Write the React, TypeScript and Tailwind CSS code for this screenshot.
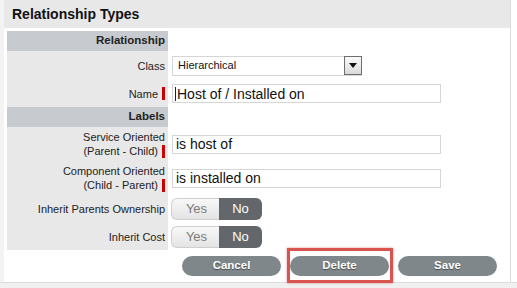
import React from "react";

const font = { fontFamily: '"Liberation Sans", Arial, sans-serif' };

function Req() {
  return <span className="inline-block w-[3px] h-[13px] bg-[#cc0000] ml-[4px] align-middle" />;
}

function Label({ children, h }: { children: React.ReactNode; h: string }) {
  return (
    <div className={`w-[161px] ${h} bg-[#e8e8e8] flex items-center justify-end pr-[3px] text-right text-[11px] leading-[14px] text-[#222]`}>
      {children}
    </div>
  );
}

function Section({ title }: { title: string }) {
  return (
    <div className="flex h-[20px]">
      <div className="w-[161px] bg-[#c7cbcf] flex items-center justify-end pr-[3px] text-[11.5px] font-bold text-[#222]">
        {title}
      </div>
      <div className="flex-1" />
    </div>
  );
}

function TextBox({ value, caret }: { value: string; caret?: boolean }) {
  return (
    <div className="w-[269px] h-[19px] border border-[#d6d6d6] bg-white flex items-center pl-[2px] text-[14px] text-[#111] leading-none">
      {caret && <span className="inline-block w-px h-[14px] bg-[#222] mr-px" />}
      <span className={caret ? "" : "pl-[1px]"}>{value}</span>
    </div>
  );
}

function Toggle() {
  return (
    <div className="flex h-[22px] w-[91px] text-[13px]">
      <div className="w-[48px] rounded-l-[6px] border border-[#cfcfcf] border-r-0 bg-gradient-to-b from-[#f8f8f8] to-[#e4e4e4] flex items-center justify-center text-[#7a7a7a] pl-[2px]">
        Yes
      </div>
      <div className="flex-1 rounded-r-[6px] bg-[#63676b] flex items-center justify-center text-white">
        No
      </div>
    </div>
  );
}

function Btn({ children }: { children: React.ReactNode }) {
  return (
    <div className="w-[99px] h-[20px] rounded-full bg-[#7f878a] flex items-center justify-center text-white text-[11.5px] font-bold [text-shadow:0_1px_1px_rgba(0,0,0,0.45)]">
      {children}
    </div>
  );
}

export default function App() {
  return (
    <div className="w-[517px] h-[288px] bg-[#f2f2f2] flex flex-col overflow-hidden" style={font}>
      <div className="flex h-[282px]">
        <div className="w-[4px] bg-[#f3f3f3]" />
        <div className="w-[506px] bg-white flex flex-col">
          <div className="h-[28px] bg-[#e8e8e8] flex items-center pl-[8px] text-[14px] font-bold text-[#111]">
            Relationship Types
          </div>
          <div className="flex-1 pl-[3px] pt-[3px] flex flex-col">
            <Section title="Relationship" />
            <div className="flex">
              <Label h="h-[29px]">Class</Label>
              <div className="flex-1 pl-[4px] flex items-center">
                <div className="w-[190px] h-[20px] border border-[#d6d6d6] bg-white flex items-center text-[11px] text-[#111]">
                  <span className="flex-1 pl-[5px]">Hierarchical</span>
                  <div className="w-[18px] h-[19px] border border-[#6e6e6e] bg-gradient-to-b from-[#fbfbfb] to-[#d9d9d9] flex items-center justify-center -mr-px">
                    <svg width="8" height="5" viewBox="0 0 8 5">
                      <path d="M0 0H8L4 5Z" fill="#111" />
                    </svg>
                  </div>
                </div>
              </div>
            </div>
            <div className="flex">
              <Label h="h-[27px]">
                <span>Name</span>
                <Req />
              </Label>
              <div className="flex-1 pl-[4px] flex items-center">
                <TextBox value="Host of / Installed on" caret />
              </div>
            </div>
            <Section title="Labels" />
            <div className="flex">
              <Label h="h-[34px]">
                <div className="flex flex-col items-end">
                  <span>Service Oriented</span>
                  <span className="flex items-center">
                    (Parent - Child)
                    <Req />
                  </span>
                </div>
              </Label>
              <div className="flex-1 pl-[4px] flex items-center">
                <TextBox value="is host of" />
              </div>
            </div>
            <div className="flex">
              <Label h="h-[34px]">
                <div className="flex flex-col items-end">
                  <span>Component Oriented</span>
                  <span className="flex items-center">
                    (Child - Parent)
                    <Req />
                  </span>
                </div>
              </Label>
              <div className="flex-1 pl-[4px] flex items-center">
                <TextBox value="is installed on" />
              </div>
            </div>
            <div className="flex">
              <Label h="h-[28px]">Inherit Parents Ownership</Label>
              <div className="flex-1 pl-[3px] flex items-center">
                <Toggle />
              </div>
            </div>
            <div className="flex">
              <Label h="h-[27px]">Inherit Cost</Label>
              <div className="flex-1 pl-[3px] flex items-center">
                <Toggle />
              </div>
            </div>
            <div className="flex justify-end gap-[9px] pr-[13px] mt-[6px]">
              <Btn>Cancel</Btn>
              <div className="relative">
                <Btn>Delete</Btn>
                <div className="absolute left-[-3px] right-[-4px] top-[-8px] bottom-[-7px] border-[3px] border-[#d9534f] shadow-[0_0_2px_rgba(200,60,60,0.6)]" />
              </div>
              <Btn>Save</Btn>
            </div>
          </div>
        </div>
        <div className="w-[7px] bg-white border-l border-[#dcdcdc]" />
      </div>
      <div className="flex-1 bg-[#f0f0f0] border-t border-[#dddddd]" />
    </div>
  );
}
